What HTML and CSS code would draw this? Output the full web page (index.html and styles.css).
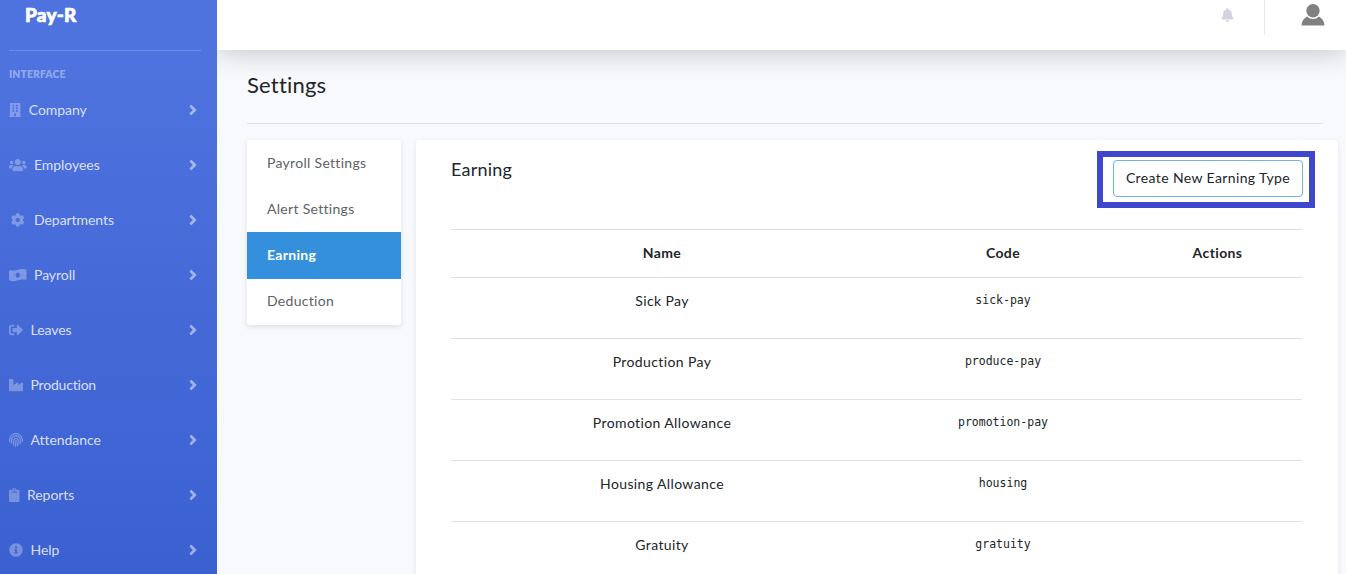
FILE: index.html
```html
<!DOCTYPE html>
<html lang="en">
<head>
<meta charset="utf-8">
<title>Pay-R Settings</title>
<link rel="stylesheet" href="styles.css">
</head>
<body>
<div class="app">
  <aside class="sidebar">
    <a class="brand">Pay-R</a>
    <div class="divider"></div>
    <div class="heading">Interface</div>
    <nav>
      <a class="item company"><svg class="icon" viewBox="0 0 448 512"><path fill-rule="evenodd" d="M436 480h-20V24c0-13-11-24-24-24H56C43 0 32 11 32 24v456H12c-7 0-12 5-12 12v20h448v-20c0-7-5-12-12-12zM128 64h64v64h-64zM256 64h64v64h-64zM128 160h64v64h-64zM256 160h64v64h-64zM128 256h64v64h-64zM256 256h64v64h-64zM192 384h64v96h-64z"/></svg><span>Company</span><svg class="angle" viewBox="0 0 256 512"><use href="#angle"/></svg></a>
      <a class="item employees"><svg class="icon" viewBox="0 0 640 512"><path d="M96 224c35.300 0 64-28.700 64-64s-28.700-64-64-64-64 28.700-64 64 28.700 64 64 64zm448 0c35.300 0 64-28.700 64-64s-28.700-64-64-64-64 28.700-64 64 28.700 64 64 64zm32 32h-64c-17.600 0-33.500 7.100-45.100 18.600 40.300 22.100 68.900 62 75.100 109.400h66c17.700 0 32-14.300 32-32v-32c0-35.300-28.700-64-64-64zm-256 0c61.900 0 112-50.100 112-112S381.900 32 320 32 208 82.100 208 144s50.100 112 112 112zm76.800 32h-8.300c-20.800 10-43.900 16-68.500 16s-47.600-6-68.500-16h-8.300C179.600 288 128 339.600 128 403.200V432c0 26.500 21.500 48 48 48h288c26.500 0 48-21.500 48-48v-28.800c0-63.600-51.600-115.200-115.200-115.200zm-223.700-13.400C161.500 263.100 145.600 256 128 256H64c-35.300 0-64 28.700-64 64v32c0 17.700 14.300 32 32 32h65.900c6.300-47.400 34.900-87.300 75.200-109.400z"/></svg><span>Employees</span><svg class="angle" viewBox="0 0 256 512"><use href="#angle"/></svg></a>
      <a class="item departments"><svg class="icon" viewBox="-64 0 640 512"><path d="M487.400 315.700l-42.600-24.600c4.300-23.200 4.300-47 0-70.200l42.600-24.600c4.900-2.800 7.100-8.600 5.500-14-11.100-35.600-30-67.800-54.700-94.600-3.800-4.100-10-5.100-14.800-2.300L380.800 110c-17.900-15.400-38.500-27.300-60.800-35.100V25.800c0-5.600-3.900-10.500-9.400-11.700-36.700-8.200-74.300-7.800-109.200 0-5.500 1.200-9.400 6.100-9.400 11.700V75c-22.200 7.900-42.800 19.800-60.800 35.100L88.700 85.500c-4.900-2.800-11-1.900-14.800 2.300-24.700 26.700-43.600 58.900-54.700 94.600-1.700 5.400.6 11.200 5.500 14L67.300 221c-4.300 23.200-4.300 47 0 70.200l-42.600 24.600c-4.900 2.800-7.100 8.600-5.500 14 11.100 35.600 30 67.800 54.700 94.600 3.800 4.100 10 5.100 14.800 2.300l42.600-24.600c17.900 15.400 38.500 27.300 60.800 35.100v49.200c0 5.600 3.900 10.500 9.400 11.700 36.700 8.200 74.300 7.800 109.200 0 5.500-1.200 9.400-6.100 9.400-11.700v-49.200c22.200-7.900 42.800-19.800 60.800-35.100l42.600 24.600c4.900 2.800 11 1.900 14.800-2.300 24.700-26.700 43.600-58.900 54.700-94.600 1.500-5.500-.7-11.300-5.600-14.100zM256 336c-44.100 0-80-35.900-80-80s35.900-80 80-80 80 35.900 80 80-35.900 80-80 80z"/></svg><span>Departments</span><svg class="angle" viewBox="0 0 256 512"><use href="#angle"/></svg></a>
      <a class="item payroll"><svg class="icon" viewBox="0 0 640 512"><path fill-rule="evenodd" d="M621 54C582 38 544 32 505 32 382 32 258 94 135 94c-31 0-62-4-92-13C20 74 0 90 0 111v317c0 13 7 25 19 30 39 16 77 22 116 22 123 0 247-62 370-62 31 0 62 4 92 13 23 7 43-9 43-30V84c0-13-7-25-19-30zM320 352c-44 0-80-43-80-96s36-96 80-96 80 43 80 96-36 96-80 96z"/></svg><span>Payroll</span><svg class="angle" viewBox="0 0 256 512"><use href="#angle"/></svg></a>
      <a class="item leaves"><svg class="icon" viewBox="0 0 512 512"><path d="M497 273L329 441c-15 15-41 4.500-41-17v-96H152c-13.300 0-24-10.700-24-24v-96c0-13.300 10.700-24 24-24h136V88c0-21.400 25.900-32 41-17l168 168c9.300 9.400 9.300 24.600 0 34zM192 436v-40c0-6.600-5.400-12-12-12H96c-17.700 0-32-14.300-32-32V160c0-17.700 14.300-32 32-32h84c6.600 0 12-5.400 12-12V76c0-6.600-5.400-12-12-12H96c-53 0-96 43-96 96v192c0 53 43 96 96 96h84c6.600 0 12-5.400 12-12z"/></svg><span>Leaves</span><svg class="angle" viewBox="0 0 256 512"><use href="#angle"/></svg></a>
      <a class="item production"><svg class="icon" viewBox="0 0 512 512"><path d="M475 164L336 252v-68c0-19-21-30-37-20L160 252V56c0-13-11-24-24-24H24C11 32 0 43 0 56v400c0 13 11 24 24 24h464c13 0 24-11 24-24V184c0-19-21-30-37-20z"/></svg><span>Production</span><svg class="angle" viewBox="0 0 256 512"><use href="#angle"/></svg></a>
      <a class="item attendance"><svg class="icon" viewBox="0 0 512 512"><path class="ridge" d="M24 318v-64a232 232 0 0 1 76-170M145 53a232 232 0 0 1 343 201v62M92 368c8-35 8-70 7-112a157 157 0 0 1 155-157 157 157 0 0 1 157 157c1 49-2 91-10 136M164 432c15-55 14-111 13-174a79 79 0 0 1 157 0c1 75-4 145-22 210M256 250c1 85-3 163-25 238"/></svg><span>Attendance</span><svg class="angle" viewBox="0 0 256 512"><use href="#angle"/></svg></a>
      <a class="item reports"><svg class="icon" viewBox="0 0 384 512"><path d="M384 112v352c0 26.500-21.500 48-48 48H48c-26.500 0-48-21.500-48-48V112c0-26.500 21.500-48 48-48h80c0-35.300 28.700-64 64-64s64 28.700 64 64h80c26.500 0 48 21.500 48 48zM192 40c-13.300 0-24 10.700-24 24s10.700 24 24 24 24-10.700 24-24-10.700-24-24-24m96 114v-20a6 6 0 0 0-6-6H102a6 6 0 0 0-6 6v20a6 6 0 0 0 6 6h180a6 6 0 0 0 6-6z"/></svg><span>Reports</span><svg class="angle" viewBox="0 0 256 512"><use href="#angle"/></svg></a>
      <a class="item help"><svg class="icon" viewBox="0 0 512 512"><path fill-rule="evenodd" d="M256 8C119 8 8 119 8 256s111 248 248 248 248-111 248-248S393 8 256 8zm0 110a42 42 0 1 1 0 84 42 42 0 1 1 0-84zm56 254c0 7-5 12-12 12h-88c-7 0-12-5-12-12v-24c0-7 5-12 12-12h12v-64h-12c-7 0-12-5-12-12v-24c0-7 5-12 12-12h64c7 0 12 5 12 12v100h12c7 0 12 5 12 12v24z"/></svg><span>Help</span><svg class="angle" viewBox="0 0 256 512"><path id="angle" d="M224.300 273l-136 136c-9.400 9.400-24.600 9.400-33.900 0l-22.600-22.600c-9.400-9.400-9.400-24.600 0-33.900l96.400-96.400-96.400-96.400c-9.400-9.400-9.400-24.600 0-33.900L54.300 103c9.400-9.400 24.600-9.400 33.900 0l136 136c9.500 9.400 9.500 24.600.1 34z"/></svg></a>
    </nav>
  </aside>
  <div class="content">
    <header class="topbar">
      <svg class="bell" viewBox="0 0 448 512"><path d="M224 512c35.300 0 64-28.700 64-64H160c0 35.300 28.700 64 64 64zm215.400-149.700c-19.300-20.800-55.500-52-55.500-154.300 0-77.700-54.500-139.900-127.900-155.200V32c0-17.700-14.300-32-32-32s-32 14.300-32 32v20.800C118.600 68.100 64.100 130.300 64.100 208c0 102.300-36.200 133.500-55.500 154.300-6 6.400-8.700 14.200-8.600 21.700.1 16.400 13 32 32.100 32h383.800c19.100 0 32-15.600 32.100-32 0-7.500-2.600-15.300-8.600-21.700z"/></svg>
      <div class="separator"></div>
      <svg class="avatar" viewBox="0 0 24 22"><circle cx="12" cy="6.700" r="6.700"/><path d="M.5 21.600c.4-4.700 2.600-7.400 5.600-9a8.200 8.200 0 0 0 11.800 0c3 1.600 5.200 4.300 5.600 9z"/></svg>
    </header>
    <main>
      <h1>Settings</h1>
      <div class="row">
        <nav class="tabs">
          <a>Payroll Settings</a>
          <a>Alert Settings</a>
          <a class="active">Earning</a>
          <a class="last">Deduction</a>
        </nav>
        <section class="card">
          <div class="card-head">
            <h2>Earning</h2>
            <div class="highlight"><button>Create New Earning Type</button></div>
          </div>
          <table>
            <thead><tr><th class="c-name">Name</th><th class="c-code">Code</th><th class="c-act">Actions</th></tr></thead>
            <tbody>
              <tr><td>Sick Pay</td><td><code>sick-pay</code></td><td></td></tr>
              <tr><td>Production Pay</td><td><code>produce-pay</code></td><td></td></tr>
              <tr><td>Promotion Allowance</td><td><code>promotion-pay</code></td><td></td></tr>
              <tr><td>Housing Allowance</td><td><code>housing</code></td><td></td></tr>
              <tr><td>Gratuity</td><td><code>gratuity</code></td><td></td></tr>
            </tbody>
          </table>
        </section>
      </div>
    </main>
  </div>
</div>
</body>
</html>
```
FILE: styles.css
```css
* { box-sizing: border-box; }
body { margin: 0; height: 574px; overflow: hidden; font: 14px/20px Lato, "Liberation Sans", sans-serif; font-variant-ligatures: none; color: #212529; background: #f8f9fc; }
.app { display: flex; height: 574px; overflow: hidden; }

.sidebar { position: relative; z-index: 1; width: 217px; flex: none; padding: 0 16px 0 9px; background: linear-gradient(180deg, #4e73df 0, #4e73df 60px, #3b60d0 574px); color: rgba(255,255,255,.8); }
.brand { display: block; height: 50px; padding: 3px 0 0 16px; font-weight: 900; font-size: 19px; line-height: 24px; color: #fff; -webkit-text-stroke: .7px #fff; letter-spacing: .2px; }
.divider { height: 1px; background: rgba(255,255,255,.18); }
.heading { height: 32px; padding-top: 13px; font-size: 10.400px; line-height: 20px; font-weight: 800; letter-spacing: .1px; text-transform: uppercase; color: rgba(255,255,255,.4); }
.item { display: flex; align-items: center; height: 55px; padding: 0 4px 2px 0; }
.icon { height: 14px; flex: none; margin-right: 7.500px; fill: rgba(255,255,255,.3); }
.ridge { fill: none; stroke: rgba(255,255,255,.3); stroke-width: 50; stroke-linecap: round; }
.item span { flex: 1; letter-spacing: -.05px; }
.production span { letter-spacing: -.2px; }
.angle { height: 16px; flex: none; margin-top: 1px; fill: rgba(255,255,255,.5); stroke: rgba(255,255,255,.15); stroke-width: 24; }

.content { flex: 1; min-width: 0; }
.topbar { position: relative; display: flex; height: 50px; padding-right: 21px; justify-content: flex-end; background: #fff; box-shadow: 0 2px 28px rgba(58,59,69,.28); }
.bell { width: 13px; height: 14px; margin: 8px 30px 0 0; fill: #d1d3e2; }
.separator { width: 1px; height: 34px; margin-right: 36px; background: #e3e6f0; }
.avatar { width: 24px; height: 22px; margin-top: 4px; fill: #808080; }
main { padding: 0 8px 0 30px; }
h1 { margin: 0 15px 16px 0; height: 74px; padding-top: 21px; border-bottom: 1px solid #dddfe3; font-size: 22px; line-height: 28px; font-weight: 400; letter-spacing: .2px; }
.row { display: flex; align-items: flex-start; gap: 15px; }
.tabs { width: 154px; flex: none; background: #fff; border-radius: 3px; box-shadow: 0 2px 5px rgba(58,59,69,.13); }
.tabs a { display: block; height: 46px; padding: 13px 20px; letter-spacing: .3px; color: #606266; }
.tabs .active { height: 47px; background: #3490dc; color: #fff; font-weight: 700; }
.tabs .last { padding-top: 12px; }
.card { flex: 1; height: 460px; padding: 11px 36px 0 35px; background: #fff; border-radius: 4px; box-shadow: 0 2px 5px rgba(58,59,69,.1); }
.card-head { display: flex; justify-content: space-between; height: 78px; }
h2 { margin: 7px 0 0; font-size: 18px; line-height: 22px; font-weight: 400; letter-spacing: .2px; }
.highlight { height: 57px; width: 218px; margin-right: -13px; padding: 3px 6px 5px 10px; border: 6px solid #3f48cc; }
button { width: 190px; height: 37px; padding: 0 0 2px; border: 1px solid #6cb2eb; border-radius: 4px; background: #fff; color: #212529; font: inherit; letter-spacing: .38px; }
table { width: 851px; table-layout: fixed; border-collapse: separate; border-spacing: 0; text-align: center; letter-spacing: .38px; }
th, td { padding: 13px 0 0; vertical-align: top; border-top: 1px solid #dee2e6; }
th { height: 48px; }
td { height: 61px; }
.c-name { width: 422px; }
.c-code { width: 260px; }
.c-act { width: 169px; }
code { display: block; font: 11.500px/18px "DejaVu Sans Mono", monospace; letter-spacing: 0; }
```
